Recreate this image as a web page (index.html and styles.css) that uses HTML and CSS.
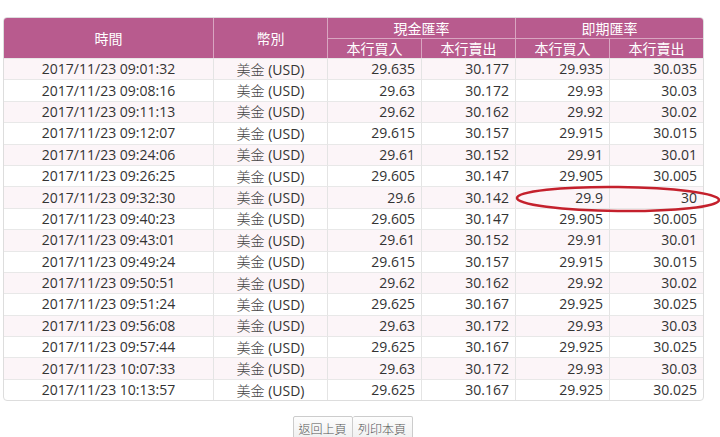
FILE: index.html
```html
<!DOCTYPE html>
<html lang="zh-Hant">
<head>
<meta charset="utf-8">
<link rel="stylesheet" href="styles.css">
</head>
<body>
<div class="page">
  <div class="table-wrap">
    <table class="rates">
      <colgroup>
        <col class="c-time"><col class="c-cur"><col class="c-n1"><col class="c-n2"><col class="c-n3"><col class="c-n4">
      </colgroup>
      <thead>
        <tr class="h1">
          <th rowspan="2">時間</th>
          <th rowspan="2">幣別</th>
          <th colspan="2">現金匯率</th>
          <th colspan="2">即期匯率</th>
        </tr>
        <tr class="h2">
          <th>本行買入</th><th>本行賣出</th><th>本行買入</th><th>本行賣出</th>
        </tr>
      </thead>
      <tbody>
        <tr><td class="t">2017/11/23 09:01:32</td><td class="t"><span class="cjk">美金</span> (USD)</td><td>29.635</td><td>30.177</td><td>29.935</td><td>30.035</td></tr>
        <tr><td class="t">2017/11/23 09:08:16</td><td class="t"><span class="cjk">美金</span> (USD)</td><td>29.63</td><td>30.172</td><td>29.93</td><td>30.03</td></tr>
        <tr><td class="t">2017/11/23 09:11:13</td><td class="t"><span class="cjk">美金</span> (USD)</td><td>29.62</td><td>30.162</td><td>29.92</td><td>30.02</td></tr>
        <tr><td class="t">2017/11/23 09:12:07</td><td class="t"><span class="cjk">美金</span> (USD)</td><td>29.615</td><td>30.157</td><td>29.915</td><td>30.015</td></tr>
        <tr><td class="t">2017/11/23 09:24:06</td><td class="t"><span class="cjk">美金</span> (USD)</td><td>29.61</td><td>30.152</td><td>29.91</td><td>30.01</td></tr>
        <tr><td class="t">2017/11/23 09:26:25</td><td class="t"><span class="cjk">美金</span> (USD)</td><td>29.605</td><td>30.147</td><td>29.905</td><td>30.005</td></tr>
        <tr><td class="t">2017/11/23 09:32:30</td><td class="t"><span class="cjk">美金</span> (USD)</td><td>29.6</td><td>30.142</td><td>29.9</td><td>30</td></tr>
        <tr><td class="t">2017/11/23 09:40:23</td><td class="t"><span class="cjk">美金</span> (USD)</td><td>29.605</td><td>30.147</td><td>29.905</td><td>30.005</td></tr>
        <tr><td class="t">2017/11/23 09:43:01</td><td class="t"><span class="cjk">美金</span> (USD)</td><td>29.61</td><td>30.152</td><td>29.91</td><td>30.01</td></tr>
        <tr><td class="t">2017/11/23 09:49:24</td><td class="t"><span class="cjk">美金</span> (USD)</td><td>29.615</td><td>30.157</td><td>29.915</td><td>30.015</td></tr>
        <tr><td class="t">2017/11/23 09:50:51</td><td class="t"><span class="cjk">美金</span> (USD)</td><td>29.62</td><td>30.162</td><td>29.92</td><td>30.02</td></tr>
        <tr><td class="t">2017/11/23 09:51:24</td><td class="t"><span class="cjk">美金</span> (USD)</td><td>29.625</td><td>30.167</td><td>29.925</td><td>30.025</td></tr>
        <tr><td class="t">2017/11/23 09:56:08</td><td class="t"><span class="cjk">美金</span> (USD)</td><td>29.63</td><td>30.172</td><td>29.93</td><td>30.03</td></tr>
        <tr><td class="t">2017/11/23 09:57:44</td><td class="t"><span class="cjk">美金</span> (USD)</td><td>29.625</td><td>30.167</td><td>29.925</td><td>30.025</td></tr>
        <tr><td class="t">2017/11/23 10:07:33</td><td class="t"><span class="cjk">美金</span> (USD)</td><td>29.63</td><td>30.172</td><td>29.93</td><td>30.03</td></tr>
        <tr><td class="t">2017/11/23 10:13:57</td><td class="t"><span class="cjk">美金</span> (USD)</td><td>29.625</td><td>30.167</td><td>29.925</td><td>30.025</td></tr>
      </tbody>
    </table>
    <svg class="circle" width="210" height="30" viewBox="0 0 210 30">
      <ellipse cx="105" cy="15" rx="101" ry="12" fill="none" stroke="#c4202c" stroke-width="2.6" transform="rotate(0.6 105 15)"/>
    </svg>
  </div>
  <div class="actions">
    <button class="btn">返回上頁</button><button class="btn">列印本頁</button>
  </div>
</div>
</body>
</html>
```
FILE: styles.css
```css
html, body {
  margin: 0;
  padding: 0;
  background: #fff;
}
body {
  font-family: "Open Sans", "Noto Sans CJK TC", sans-serif;
  color: #333;
}
.page {
  padding: 17px 18px 0 3px;
}
.table-wrap {
  position: relative;
  width: 699px;
}
.rates {
  width: 699px;
  border-collapse: separate;
  border-spacing: 0;
  table-layout: fixed;
  font-size: 14px;
  border: 1px solid #ddd;
  border-radius: 4px;
  overflow: hidden;
}
.c-time { width: 209px; }
.c-cur { width: 114px; }
.c-n1 { width: 94px; }
.c-n2 { width: 94px; }
.c-n3 { width: 94px; }
.c-n4 { width: 94px; }
.rates th {
  background: #b85b8e;
  color: #fff;
  font-family: "Noto Sans CJK TC", sans-serif;
  font-weight: 400;
  padding: 0;
  border-left: 1px solid #d9a5c1;
  border-bottom: 1px solid #d9a5c1;
  line-height: 19px;
}
.rates tr.h1 th { height: 20px; }
.rates tr.h2 th { height: 19px; border-bottom: none; }
.rates tr.h1 th[rowspan] { border-bottom: none; }
.rates th:first-child { border-left: none; }
.rates tr.h2 th:first-child { border-left: 1px solid #d9a5c1; }
.rates td {
  height: 20.4px;
  padding: 0 6px 0 0;
  text-align: right;
  border-left: 1px solid #e4e4e4;
  border-top: 1px solid #e8e8e8;
  line-height: 18px;
  white-space: nowrap;
}
.cjk {
  font-family: "Noto Sans CJK TC", sans-serif;
  font-weight: 300;
  color: #444;
}
.rates td:first-child { border-left: none; }
.rates td.t { text-align: center; padding: 0; }
.rates tbody tr:nth-child(odd) td { background: #fcf5f8; }
.circle {
  position: absolute;
  left: 510px;
  top: 167px;
  overflow: visible;
}
.actions {
  display: flex;
  justify-content: center;
  padding-top: 15px;
}
.btn {
  font-family: "Noto Sans CJK TC", sans-serif;
  font-weight: 300;
  font-size: 12px;
  color: #555;
  background: linear-gradient(#fdfdfd, #f0f0f0);
  border: 1px solid #ccc;
  height: 24px;
  width: 60px;
  padding: 0;
  margin: 0;
  border-radius: 2px;
}
.btn + .btn { border-left: none; }
```
